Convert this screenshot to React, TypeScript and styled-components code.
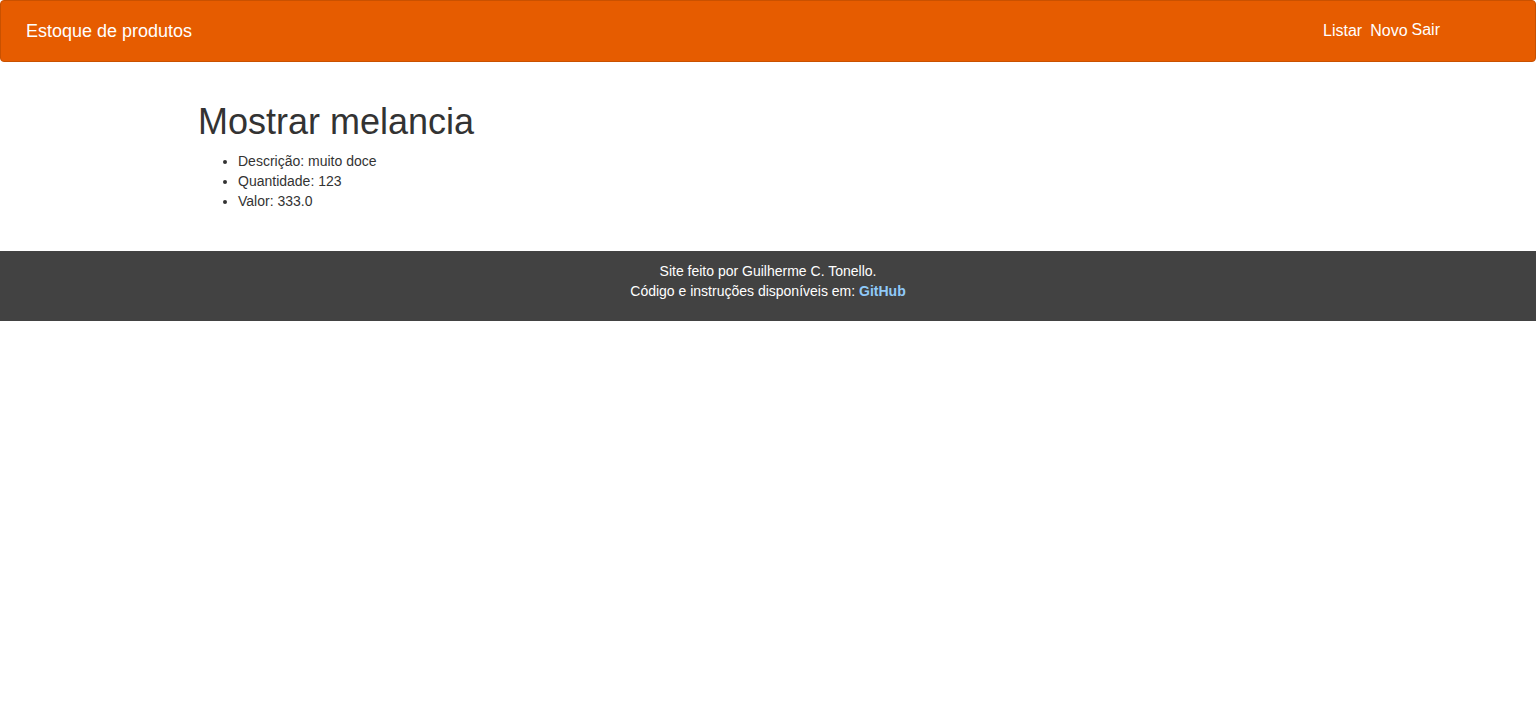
import React from "react";
import styled, { createGlobalStyle } from "styled-components";

const Global = createGlobalStyle`
  html, body { margin: 0; padding: 0; background: #fff; }
  body {
    font-family: "Liberation Sans", Arial, Helvetica, sans-serif;
    font-size: 14px;
    line-height: 20px;
    color: #333;
  }
  * { box-sizing: border-box; }
`;

const Navbar = styled.nav`
  height: 62px;
  background: #e65c00;
  border: 1px solid #c95100;
  border-radius: 4px;
  margin-bottom: 20px;
  display: flex;
  align-items: center;
  justify-content: space-between;
  padding: 0 95px 0 25px;
`;

const Brand = styled.a`
  color: #fff;
  font-size: 18px;
  line-height: 20px;
  text-decoration: none;
`;

const NavList = styled.div`
  display: flex;
  align-items: center;
  gap: 8px;
  color: #fff;
  font-size: 16px;
`;

const NavLink = styled.a<{ $raised?: boolean }>`
  color: #fff;
  text-decoration: none;
  font-size: 16px;
  line-height: 20px;
  position: relative;
  top: ${(p) => (p.$raised ? "-1px" : "0")};
  margin-left: ${(p) => (p.$raised ? "-4px" : "0")};
`;

const Container = styled.main`
  display: flow-root;
  width: 1170px;
  margin: 0 auto;
  padding: 0 15px 30px;
`;

const Title = styled.h1`
  font-size: 36px;
  font-weight: 400;
  line-height: 1.1;
  margin: 20px 0 9px;
  color: #333;
`;

const List = styled.ul`
  margin: 0 0 10px;
  padding-left: 40px;
`;

const Item = styled.li`
  line-height: 20px;
`;

const Footer = styled.footer`
  background: #424242;
  color: #fff;
  text-align: center;
  padding: 10px 0 20px;
  font-size: 14px;
  line-height: 20px;
`;

const FooterLink = styled.a`
  color: #90caf9;
  font-weight: 700;
  text-decoration: none;
`;

export default function App() {
  return (
    <>
      <Global />
      <Navbar>
        <Brand href="#">Estoque de produtos</Brand>
        <NavList>
          <NavLink href="#">Listar</NavLink>
          <NavLink href="#">Novo</NavLink>
          <NavLink href="#" $raised>Sair</NavLink>
        </NavList>
      </Navbar>
      <Container>
        <Title>Mostrar melancia</Title>
        <List>
          <Item>Descrição: muito doce</Item>
          <Item>Quantidade: 123</Item>
          <Item>Valor: 333.0</Item>
        </List>
      </Container>
      <Footer>
        Site feito por Guilherme C. Tonello.
        <br />
        Código e instruções disponíveis em: <FooterLink href="#">GitHub</FooterLink>
      </Footer>
    </>
  );
}
